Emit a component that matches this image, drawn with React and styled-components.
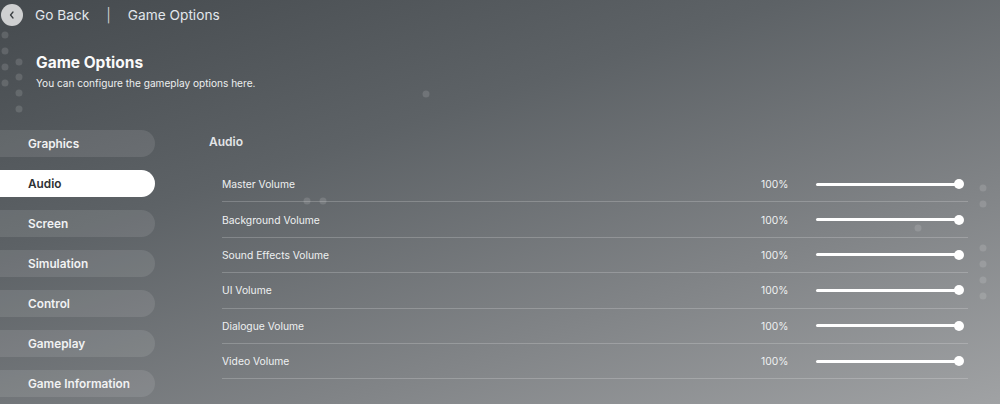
import React from "react";
import styled, { createGlobalStyle } from "styled-components";

const Global = createGlobalStyle`
  html, body { margin: 0; padding: 0; }
  body { font-family: Inter, "Noto Sans", sans-serif; }
`;

const Screen = styled.div`
  position: relative;
  width: 1000px;
  height: 404px;
  overflow: hidden;
  background: linear-gradient(162deg, #454a4e 0%, #5d6266 35%, #818487 70%, #a0a2a4 100%);
  color: #f2f2f2;
`;

const TopBar = styled.div`
  display: flex;
  align-items: center;
  height: 30px;
  padding-left: 1px;
  font-size: 13.7px;
  color: #e2e7ec;
`;

const BackCircle = styled.div`
  width: 22px;
  height: 22px;
  border-radius: 50%;
  background: #cfd0d1;
  display: flex;
  align-items: center;
  justify-content: center;
  margin-right: 12px;
`;

const Sep = styled.span`
  margin: 0 17px 0 17px;
  color: #c8cacc;
`;

const Header = styled.div`
  padding: 23px 0 0 36px;
`;

const Title = styled.h1`
  margin: 0;
  font-size: 15.5px;
  font-weight: 700;
  color: #fafafa;
  line-height: 20px;
`;

const Sub = styled.p`
  margin: 4px 0 0;
  font-size: 10.1px;
  color: #eceeef;
`;

const Body = styled.div`
  display: flex;
  margin-top: 41px;
`;

const Side = styled.div`
  display: flex;
  flex-direction: column;
  gap: 13px;
  width: 155px;
`;

const Pill = styled.div`
  height: 27px;
  border-radius: 0 14px 14px 0;
  display: flex;
  align-items: center;
  padding-left: 28px;
  font-size: 11.8px;
  font-weight: 600;
  background: ${(p) => (p.$active ? "#ffffff" : "rgba(255,255,255,0.1)")};
  color: ${(p) => (p.$active ? "#2d3134" : "#f1f2f3")};
`;

const Content = styled.div`
  flex: 1;
  padding-left: 54px;
  padding-right: 32px;
`;

const Section = styled.div`
  font-size: 12px;
  font-weight: 600;
  color: #e3e5e7;
  margin-top: 4px;
  line-height: 16px;
`;

const Rows = styled.div`
  margin-left: 13px;
  margin-top: 17px;
`;

const Row = styled.div`
  height: 34.4px;
  border-bottom: 1px solid rgba(255, 255, 255, 0.2);
  display: flex;
  align-items: center;
  font-size: 10.3px;
  color: #eef0f1;
`;

const Label = styled.span`
  flex: 1;
`;

const Value = styled.span`
  width: 28px;
  margin-right: 27px;
`;

const Track = styled.div`
  position: relative;
  width: 143px;
  height: 3px;
  border-radius: 2px;
  background: #ffffff;
  margin-right: 9px;
`;

const Knob = styled.div`
  position: absolute;
  right: -5px;
  top: -3.5px;
  width: 10px;
  height: 10px;
  border-radius: 50%;
  background: #ffffff;
`;

const Dot = styled.div`
  position: absolute;
  width: 7px;
  height: 7px;
  border-radius: 50%;
  background: rgba(255, 255, 255, 0.13);
  transform: translate(-50%, -50%);
`;

const dots = [
  [5, 35], [5, 51], [5, 67], [5, 83],
  [19, 62], [19, 77], [19, 93], [19, 109],
  [426, 94], [307, 201], [323, 201], [918, 228],
  [983, 188], [983, 204], [983, 248], [983, 264], [983, 280], [983, 296],
];

const tabs = ["Graphics", "Audio", "Screen", "Simulation", "Control", "Gameplay", "Game Information"];
const volumes = ["Master Volume", "Background Volume", "Sound Effects Volume", "UI Volume", "Dialogue Volume", "Video Volume"];

export default function App() {
  return (
    <Screen>
      <Global />
      {dots.map(([x, y], i) => (
        <Dot key={i} style={{ left: x, top: y }} />
      ))}
      <TopBar>
        <BackCircle>
          <svg width="10" height="10" viewBox="0 0 10 10">
            <path d="M6 2 L3.5 5 L6 8" stroke="#3a3e41" strokeWidth="1.3" fill="none" strokeLinecap="round" strokeLinejoin="round" />
          </svg>
        </BackCircle>
        <span>Go Back</span>
        <Sep>|</Sep>
        <span>Game Options</span>
      </TopBar>
      <Header>
        <Title>Game Options</Title>
        <Sub>You can configure the gameplay options here.</Sub>
      </Header>
      <Body>
        <Side>
          {tabs.map((t) => (
            <Pill key={t} $active={t === "Audio"}>{t}</Pill>
          ))}
        </Side>
        <Content>
          <Section>Audio</Section>
          <Rows>
            {volumes.map((v) => (
              <Row key={v}>
                <Label>{v}</Label>
                <Value>100%</Value>
                <Track><Knob /></Track>
              </Row>
            ))}
          </Rows>
        </Content>
      </Body>
    </Screen>
  );
}
